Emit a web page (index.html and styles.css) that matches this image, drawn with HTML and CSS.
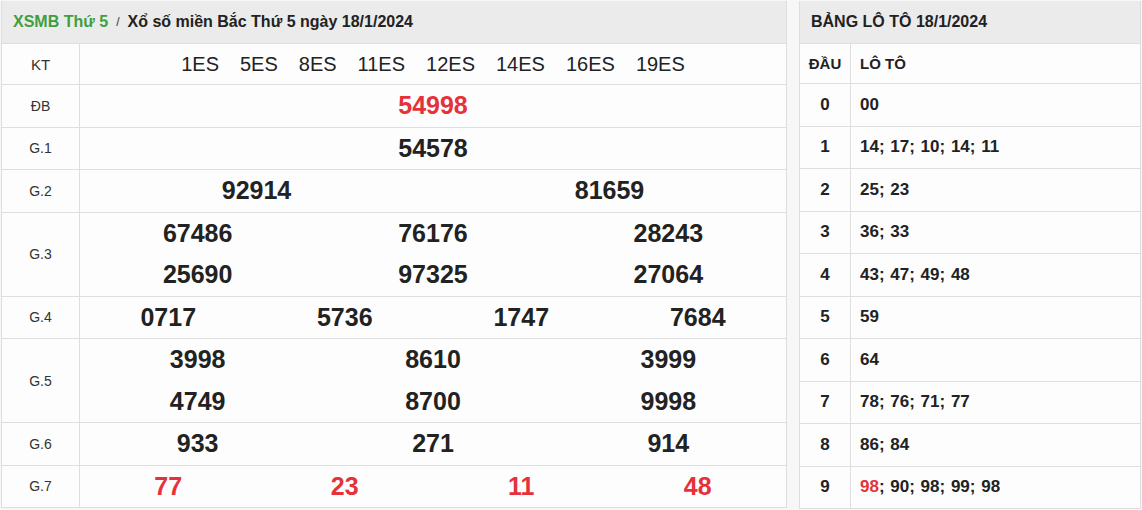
FILE: index.html
```html
<!DOCTYPE html>
<html lang="vi">
<head>
<meta charset="utf-8">
<title>XSMB Thứ 5</title>
<link rel="stylesheet" href="styles.css">
</head>
<body>
<div class="wrap">
  <section class="panel results">
    <div class="head">
      <span class="crumb">XSMB Thứ 5</span>
      <span class="sep">/</span>
      <span class="title">Xổ số miền Bắc Thứ 5 ngày 18/1/2024</span>
    </div>
    <div class="row kt">
      <div class="label">KT</div>
      <div class="codes"><span>1ES</span><span>5ES</span><span>8ES</span><span>11ES</span><span>12ES</span><span>14ES</span><span>16ES</span><span>19ES</span></div>
    </div>
    <div class="row">
      <div class="label">ĐB</div>
      <div class="vals c1"><div class="num red">54998</div></div>
    </div>
    <div class="row">
      <div class="label">G.1</div>
      <div class="vals c1"><div class="num">54578</div></div>
    </div>
    <div class="row">
      <div class="label">G.2</div>
      <div class="vals c2"><div class="num">92914</div><div class="num">81659</div></div>
    </div>
    <div class="row">
      <div class="label">G.3</div>
      <div class="vals c3"><div class="num">67486</div><div class="num">76176</div><div class="num">28243</div><div class="num">25690</div><div class="num">97325</div><div class="num">27064</div></div>
    </div>
    <div class="row">
      <div class="label">G.4</div>
      <div class="vals c4"><div class="num">0717</div><div class="num">5736</div><div class="num">1747</div><div class="num">7684</div></div>
    </div>
    <div class="row">
      <div class="label">G.5</div>
      <div class="vals c3"><div class="num">3998</div><div class="num">8610</div><div class="num">3999</div><div class="num">4749</div><div class="num">8700</div><div class="num">9998</div></div>
    </div>
    <div class="row">
      <div class="label">G.6</div>
      <div class="vals c3"><div class="num">933</div><div class="num">271</div><div class="num">914</div></div>
    </div>
    <div class="row">
      <div class="label">G.7</div>
      <div class="vals c4"><div class="num red">77</div><div class="num red">23</div><div class="num red">11</div><div class="num red">48</div></div>
    </div>
  </section>

  <section class="panel loto">
    <div class="head"><span class="title">BẢNG LÔ TÔ 18/1/2024</span></div>
    <div class="lrow lhead"><div class="dau">ĐẦU</div><div class="list">LÔ TÔ</div></div>
    <div class="lrow"><div class="dau">0</div><div class="list">00</div></div>
    <div class="lrow"><div class="dau">1</div><div class="list">14; 17; 10; 14; 11</div></div>
    <div class="lrow"><div class="dau">2</div><div class="list">25; 23</div></div>
    <div class="lrow"><div class="dau">3</div><div class="list">36; 33</div></div>
    <div class="lrow"><div class="dau">4</div><div class="list">43; 47; 49; 48</div></div>
    <div class="lrow"><div class="dau">5</div><div class="list">59</div></div>
    <div class="lrow"><div class="dau">6</div><div class="list">64</div></div>
    <div class="lrow"><div class="dau">7</div><div class="list">78; 76; 71; 77</div></div>
    <div class="lrow"><div class="dau">8</div><div class="list">86; 84</div></div>
    <div class="lrow"><div class="dau">9</div><div class="list"><span class="red">98</span>; 90; 98; 99; 98</div></div>
  </section>
</div>
</body>
</html>
```

FILE: styles.css
```css
* { box-sizing: border-box; }
html, body { margin: 0; padding: 0; }
body {
  background: #f7f7f7;
  font-family: Arial, "Liberation Sans", Helvetica, sans-serif;
  color: #222;
}
.wrap {
  display: flex;
  gap: 12px;
  padding: 1px;
  align-items: flex-start;
}
.panel {
  background: #fdfdfd;
  border: 1px solid #dedede;
  border-top: none;
}
.results { width: 786px; }
.loto { width: 342px; }

.head {
  height: 42px;
  background: #ebebeb;
  display: flex;
  align-items: center;
  padding-left: 11px;
  font-weight: bold;
  font-size: 16px;
  color: #222;
}
.crumb { color: #3f9f3f; }
.sep {
  font-size: 12px;
  font-weight: normal;
  margin: 0 8px 0 8px;
  color: #333;
}
.loto .head { font-size: 16px; padding-left: 11px; }

.row {
  display: flex;
  border-top: 1px solid #dedede;
}
.label {
  width: 78px;
  flex: none;
  border-right: 1px solid #dedede;
  display: flex;
  align-items: center;
  justify-content: center;
  font-size: 14px;
  color: #333;
}
.kt { height: 41px; }
.kt .label { font-size: 15px; }
.codes {
  flex: 1;
  display: flex;
  justify-content: center;
  align-items: center;
  gap: 21px;
  font-size: 20px;
  color: #222;
}
.vals {
  flex: 1;
  display: grid;
}
.c1 { grid-template-columns: 1fr; }
.c2 { grid-template-columns: repeat(2, 1fr); }
.c3 { grid-template-columns: repeat(3, 1fr); }
.c4 { grid-template-columns: repeat(4, 1fr); }
.num {
  height: 41.5px;
  display: flex;
  align-items: center;
  justify-content: center;
  font-size: 25px;
  font-weight: bold;
  color: #222;
}
.red { color: #e5323a !important; }

.lrow {
  display: flex;
  border-top: 1px solid #dedede;
  height: 42.5px;
  font-weight: bold;
  font-size: 17px;
}
.lhead { height: 40px; font-size: 15px; }
.dau {
  width: 51px;
  flex: none;
  border-right: 1px solid #dedede;
  display: flex;
  align-items: center;
  justify-content: center;
}
.list {
  flex: 1;
  display: flex;
  align-items: center;
  padding-left: 9px;
  white-space: pre;
  word-spacing: 1px;
}
.lhead .list { word-spacing: 0; }
```
